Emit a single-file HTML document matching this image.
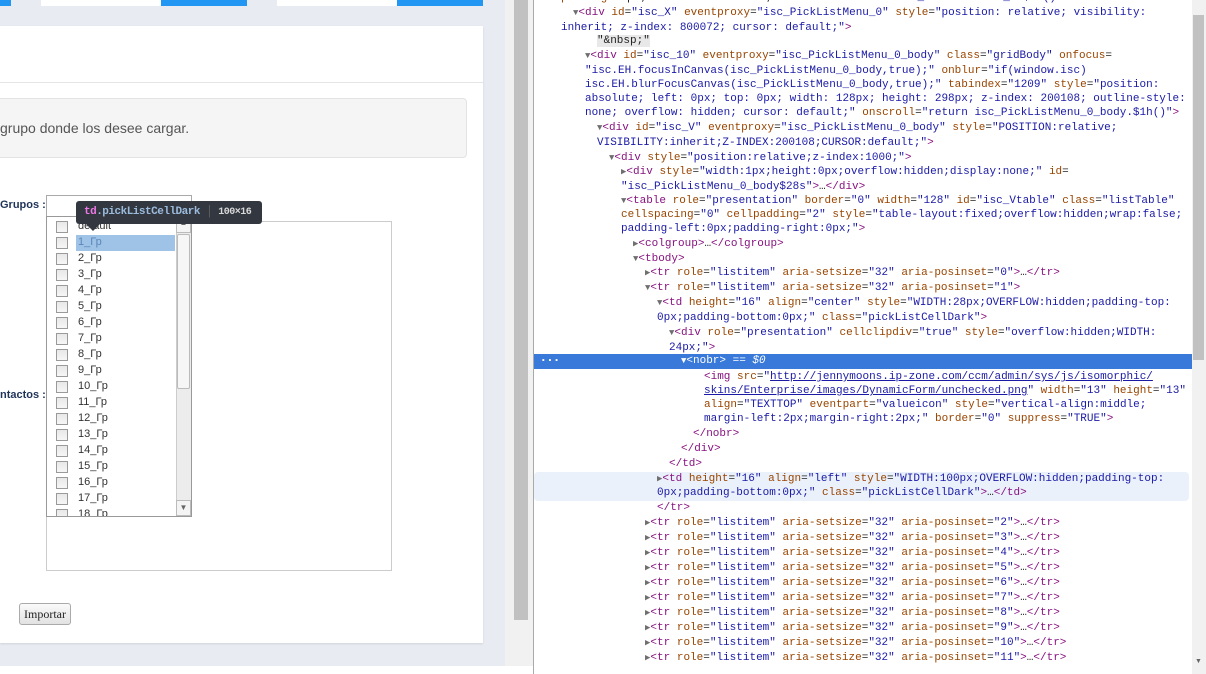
<!DOCTYPE html>
<html><head><meta charset="utf-8"><style>
*{margin:0;padding:0;box-sizing:border-box}
body{width:1206px;height:674px;overflow:hidden;background:#fff;position:relative;font-family:"Liberation Sans",sans-serif}
.abs{position:absolute}
#left{left:0;top:0;width:505px;height:666px;background:#e8ebf2;overflow:hidden}
.card{left:0;top:26px;width:483px;height:617px;background:#fff;box-shadow:0 1px 2px rgba(0,0,0,.1)}
.lbl{font:bold 11px "Liberation Sans",sans-serif;color:#1f3358}
.row{position:absolute;left:0;height:16px;width:128px;font:11px "Liberation Sans",sans-serif;color:#333}
.cb{position:absolute;left:9px;top:2px;width:12px;height:12px;border:1px solid #9a9a9a;background:linear-gradient(#e8e8e8,#f6f6f6)}
.rt{position:absolute;left:31px;top:1px}
#dt{left:533px;top:0;width:673px;height:674px;background:#fff;border-left:1px solid #aaa;overflow:hidden}
.ln{position:absolute;white-space:pre;font:11px/15px "Liberation Mono",monospace;letter-spacing:0;color:#222}
.t{color:#881280}.a{color:#994500}.v{color:#1a1aa6}.p{color:#a0a0a0}.tr{color:#6e6e6e;font-size:9px}
.u{text-decoration:underline;color:#1a1aa6}
</style></head><body>
<div id="left" class="abs">
 <div class="abs" style="left:0;top:0;width:11px;height:6px;background:#2196f3"></div>
 <div class="abs" style="left:41px;top:0;width:120px;height:6px;background:#fff"></div>
 <div class="abs" style="left:161px;top:0;width:86px;height:6px;background:#2196f3"></div>
 <div class="abs" style="left:277px;top:0;width:120px;height:6px;background:#fff"></div>
 <div class="abs" style="left:397px;top:0;width:86px;height:6px;background:#2196f3"></div>
 <div class="abs card"></div>
 <div class="abs" style="left:0;top:82px;width:483px;height:1px;background:#e5e5e5"></div>
 <div class="abs" style="left:-5px;top:98px;width:472px;height:60px;background:#f5f5f5;border:1px solid #e3e3e3;border-radius:4px"></div>
 <div class="abs" style="left:0;top:120px;font-size:14px;color:#555">grupo donde los desee cargar.</div>
 <div class="abs lbl" style="left:0;top:199px">Grupos :</div>
 <div class="abs lbl" style="left:0;top:389px">ntactos :</div>
 <div class="abs" style="left:46px;top:221px;width:346px;height:350px;border:1px solid #ccc;background:#fff"></div>
 <div class="abs" style="left:46px;top:195px;width:146px;height:22px;border:1px solid #aaa;background:#fff"></div>
 <div class="abs" style="left:46px;top:216px;width:146px;height:301px;border:1px solid #999;background:#fff;overflow:hidden">
  <div class="abs" style="left:0;top:0;width:128px;height:300px">
   <div class="row" style="top:2px"><div class="cb"></div><div class="rt">default</div></div>
   <div class="row" style="top:18px"><div class="cb"></div><div class="abs" style="left:29px;top:0;width:99px;height:16px;background:#9fc3e7"></div><div class="rt" style="color:#5b86b8">1_Гр</div></div>
   <div class="row" style="top:34px"><div class="cb"></div><div class="rt">2_Гр</div></div>
   <div class="row" style="top:50px"><div class="cb"></div><div class="rt">3_Гр</div></div>
   <div class="row" style="top:66px"><div class="cb"></div><div class="rt">4_Гр</div></div>
   <div class="row" style="top:82px"><div class="cb"></div><div class="rt">5_Гр</div></div>
   <div class="row" style="top:98px"><div class="cb"></div><div class="rt">6_Гр</div></div>
   <div class="row" style="top:114px"><div class="cb"></div><div class="rt">7_Гр</div></div>
   <div class="row" style="top:130px"><div class="cb"></div><div class="rt">8_Гр</div></div>
   <div class="row" style="top:146px"><div class="cb"></div><div class="rt">9_Гр</div></div>
   <div class="row" style="top:162px"><div class="cb"></div><div class="rt">10_Гр</div></div>
   <div class="row" style="top:178px"><div class="cb"></div><div class="rt">11_Гр</div></div>
   <div class="row" style="top:194px"><div class="cb"></div><div class="rt">12_Гр</div></div>
   <div class="row" style="top:210px"><div class="cb"></div><div class="rt">13_Гр</div></div>
   <div class="row" style="top:226px"><div class="cb"></div><div class="rt">14_Гр</div></div>
   <div class="row" style="top:242px"><div class="cb"></div><div class="rt">15_Гр</div></div>
   <div class="row" style="top:258px"><div class="cb"></div><div class="rt">16_Гр</div></div>
   <div class="row" style="top:274px"><div class="cb"></div><div class="rt">17_Гр</div></div>
   <div class="row" style="top:290px"><div class="cb"></div><div class="rt">18_Гр</div></div>
  </div>
  <div class="abs" style="left:129px;top:0;width:16px;height:300px;background:#ececec;border-left:1px solid #ccc"></div>
  <div class="abs" style="left:129px;top:0;width:15px;height:16px;background:#f4f4f4;border:1px solid #bbb;font-size:8px;color:#666;text-align:center">▲</div>
  <div class="abs" style="left:130px;top:17px;width:13px;height:155px;background:#f6f6f6;border:1px solid #bbb;border-radius:2px"></div>
  <div class="abs" style="left:129px;top:283px;width:15px;height:16px;background:#f4f4f4;border:1px solid #bbb;font-size:8px;color:#666;text-align:center;line-height:14px">▼</div>
 </div>
 <div class="abs" style="left:76px;top:201px;width:186px;height:23px;background:#333740;border-radius:3px;font:bold 11px/23px 'Liberation Mono',monospace;white-space:pre;padding-left:8px;letter-spacing:-0.5px;overflow:hidden"><span style="color:#ee78e6">td</span><span style="color:#9bbbdc">.pickListCellDark</span> <span style="color:#666;font-weight:normal">│</span> <span style="color:#d9d9d9;font-size:10px">100×16</span></div>
 <div class="abs" style="left:86px;top:224px;width:0;height:0;border-left:7px solid transparent;border-right:7px solid transparent;border-top:7px solid #333740"></div>
 <div class="abs" style="left:19px;top:603px;width:52px;height:22px;border:1px solid #aaa;border-radius:3px;background:linear-gradient(#fafafa,#e2e2e2);font:12px/20px 'Liberation Serif',serif;text-align:center;color:#222">Importar</div>
</div>
<div class="abs" style="left:505px;top:0;width:28px;height:666px;background:#f1f1f1"></div>
<div class="abs" style="left:514px;top:0;width:14px;height:620px;background:#c1c1c1"></div>
<div id="dt" class="abs">
 <div class="abs" style="left:0;top:354px;width:658px;height:15px;background:#3879d9"></div>
 <div class="abs" style="left:0;top:472px;width:655px;height:29px;background:#eaf1fb;border-radius:4px"></div>
 <div class="abs" style="left:6px;top:354px;color:#fff;font:bold 11px/13px monospace">···</div>
 <div class="abs" style="left:658px;top:0;width:15px;height:674px;background:#f1f1f1"></div>
 <div class="abs" style="left:659px;top:15px;width:11px;height:345px;background:#c1c1c1"></div>
 <div class="abs" style="left:661px;top:658px;font-size:7px;color:#666">▼</div>
</div>
<div class="abs" style="left:533px;top:0;width:658px;height:674px;overflow:hidden">
<div class="ln" style="left:28px;top:-9px"><span class="a">padding</span>: 0px; overflow: visible;" <span class="a">onscroll</span>=<span class="v">"return isc_PickListMenu_0.$1h()"</span><span class="t">&gt;</span></div>
<div class="ln" style="left:40px;top:6px"><span class="tr">▼</span><span class="t">&lt;div</span> <span class="a">id</span>=<span class="v">"isc_X"</span> <span class="a">eventproxy</span>=<span class="v">"isc_PickListMenu_0"</span> <span class="a">style</span>=<span class="v">"position: relative; visibility:</span></div>
<div class="ln" style="left:28px;top:21px"><span class="v">inherit; z-index: 800072; cursor: default;"</span><span class="t">&gt;</span></div>
<div class="ln" style="left:64px;top:34px"><span style="background:#e8e8e8">"&amp;nbsp;"</span></div>
<div class="ln" style="left:52px;top:49px"><span class="tr">▼</span><span class="t">&lt;div</span> <span class="a">id</span>=<span class="v">"isc_10"</span> <span class="a">eventproxy</span>=<span class="v">"isc_PickListMenu_0_body"</span> <span class="a">class</span>=<span class="v">"gridBody"</span> <span class="a">onfocus</span>=</div>
<div class="ln" style="left:52px;top:64px"><span class="v">"isc.EH.focusInCanvas(isc_PickListMenu_0_body,true);"</span> <span class="a">onblur</span>=<span class="v">"if(window.isc)</span></div>
<div class="ln" style="left:52px;top:78px"><span class="v">isc.EH.blurFocusCanvas(isc_PickListMenu_0_body,true);"</span> <span class="a">tabindex</span>=<span class="v">"1209"</span> <span class="a">style</span>=<span class="v">"position:</span></div>
<div class="ln" style="left:52px;top:92px"><span class="v">absolute; left: 0px; top: 0px; width: 128px; height: 298px; z-index: 200108; outline-style:</span></div>
<div class="ln" style="left:52px;top:106px"><span class="v">none; overflow: hidden; cursor: default;"</span> <span class="a">onscroll</span>=<span class="v">"return isc_PickListMenu_0_body.$1h()"</span><span class="t">&gt;</span></div>
<div class="ln" style="left:64px;top:121px"><span class="tr">▼</span><span class="t">&lt;div</span> <span class="a">id</span>=<span class="v">"isc_V"</span> <span class="a">eventproxy</span>=<span class="v">"isc_PickListMenu_0_body"</span> <span class="a">style</span>=<span class="v">"POSITION:relative;</span></div>
<div class="ln" style="left:64px;top:136px"><span class="v">VISIBILITY:inherit;Z-INDEX:200108;CURSOR:default;"</span><span class="t">&gt;</span></div>
<div class="ln" style="left:76px;top:151px"><span class="tr">▼</span><span class="t">&lt;div</span> <span class="a">style</span>=<span class="v">"position:relative;z-index:1000;"</span><span class="t">&gt;</span></div>
<div class="ln" style="left:88px;top:165px"><span class="tr">▶</span><span class="t">&lt;div</span> <span class="a">style</span>=<span class="v">"width:1px;height:0px;overflow:hidden;display:none;"</span> <span class="a">id</span>=</div>
<div class="ln" style="left:88px;top:180px"><span class="v">"isc_PickListMenu_0_body$28s"</span><span class="t">&gt;</span>…<span class="t">&lt;/div&gt;</span></div>
<div class="ln" style="left:88px;top:194px"><span class="tr">▼</span><span class="t">&lt;table</span> <span class="a">role</span>=<span class="v">"presentation"</span> <span class="a">border</span>=<span class="v">"0"</span> <span class="a">width</span>=<span class="v">"128"</span> <span class="a">id</span>=<span class="v">"isc_Vtable"</span> <span class="a">class</span>=<span class="v">"listTable"</span></div>
<div class="ln" style="left:88px;top:208px"><span class="a">cellspacing</span>=<span class="v">"0"</span> <span class="a">cellpadding</span>=<span class="v">"2"</span> <span class="a">style</span>=<span class="v">"table-layout:fixed;overflow:hidden;wrap:false;</span></div>
<div class="ln" style="left:88px;top:222px"><span class="v">padding-left:0px;padding-right:0px;"</span><span class="t">&gt;</span></div>
<div class="ln" style="left:100px;top:237px"><span class="tr">▶</span><span class="t">&lt;colgroup&gt;</span>…<span class="t">&lt;/colgroup&gt;</span></div>
<div class="ln" style="left:100px;top:252px"><span class="tr">▼</span><span class="t">&lt;tbody&gt;</span></div>
<div class="ln" style="left:112px;top:266px"><span class="tr">▶</span><span class="t">&lt;tr</span> <span class="a">role</span>=<span class="v">"listitem"</span> <span class="a">aria-setsize</span>=<span class="v">"32"</span> <span class="a">aria-posinset</span>=<span class="v">"0"</span><span class="t">&gt;</span>…<span class="t">&lt;/tr&gt;</span></div>
<div class="ln" style="left:112px;top:281px"><span class="tr">▼</span><span class="t">&lt;tr</span> <span class="a">role</span>=<span class="v">"listitem"</span> <span class="a">aria-setsize</span>=<span class="v">"32"</span> <span class="a">aria-posinset</span>=<span class="v">"1"</span><span class="t">&gt;</span></div>
<div class="ln" style="left:124px;top:296px"><span class="tr">▼</span><span class="t">&lt;td</span> <span class="a">height</span>=<span class="v">"16"</span> <span class="a">align</span>=<span class="v">"center"</span> <span class="a">style</span>=<span class="v">"WIDTH:28px;OVERFLOW:hidden;padding-top:</span></div>
<div class="ln" style="left:124px;top:311px"><span class="v">0px;padding-bottom:0px;"</span> <span class="a">class</span>=<span class="v">"pickListCellDark"</span><span class="t">&gt;</span></div>
<div class="ln" style="left:136px;top:326px"><span class="tr">▼</span><span class="t">&lt;div</span> <span class="a">role</span>=<span class="v">"presentation"</span> <span class="a">cellclipdiv</span>=<span class="v">"true"</span> <span class="a">style</span>=<span class="v">"overflow:hidden;WIDTH:</span></div>
<div class="ln" style="left:136px;top:341px"><span class="v">24px;"</span><span class="t">&gt;</span></div>
<div class="ln" style="left:148px;top:354px;color:#fff"><span class="tr" style="color:#fff">▼</span>&lt;nobr&gt; == <i>$0</i></div>
<div class="ln" style="left:171px;top:370px"><span class="t">&lt;img</span> <span class="a">src</span>=<span class="v">"</span><span class="u">http://jennymoons.ip-zone.com/ccm/admin/sys/js/isomorphic/</span></div>
<div class="ln" style="left:171px;top:384px"><span class="u">skins/Enterprise/images/DynamicForm/unchecked.png</span><span class="v">"</span> <span class="a">width</span>=<span class="v">"13"</span> <span class="a">height</span>=<span class="v">"13"</span></div>
<div class="ln" style="left:171px;top:398px"><span class="a">align</span>=<span class="v">"TEXTTOP"</span> <span class="a">eventpart</span>=<span class="v">"valueicon"</span> <span class="a">style</span>=<span class="v">"vertical-align:middle;</span></div>
<div class="ln" style="left:171px;top:412px"><span class="v">margin-left:2px;margin-right:2px;"</span> <span class="a">border</span>=<span class="v">"0"</span> <span class="a">suppress</span>=<span class="v">"TRUE"</span><span class="t">&gt;</span></div>
<div class="ln" style="left:160px;top:427px"><span class="t">&lt;/nobr&gt;</span></div>
<div class="ln" style="left:148px;top:442px"><span class="t">&lt;/div&gt;</span></div>
<div class="ln" style="left:136px;top:457px"><span class="t">&lt;/td&gt;</span></div>
<div class="ln" style="left:124px;top:472px"><span class="tr">▶</span><span class="t">&lt;td</span> <span class="a">height</span>=<span class="v">"16"</span> <span class="a">align</span>=<span class="v">"left"</span> <span class="a">style</span>=<span class="v">"WIDTH:100px;OVERFLOW:hidden;padding-top:</span></div>
<div class="ln" style="left:124px;top:486px"><span class="v">0px;padding-bottom:0px;"</span> <span class="a">class</span>=<span class="v">"pickListCellDark"</span><span class="t">&gt;</span>…<span class="t">&lt;/td&gt;</span></div>
<div class="ln" style="left:124px;top:501px"><span class="t">&lt;/tr&gt;</span></div>
<div class="ln" style="left:112px;top:516px"><span class="tr">▶</span><span class="t">&lt;tr</span> <span class="a">role</span>=<span class="v">"listitem"</span> <span class="a">aria-setsize</span>=<span class="v">"32"</span> <span class="a">aria-posinset</span>=<span class="v">"2"</span><span class="t">&gt;</span>…<span class="t">&lt;/tr&gt;</span></div>
<div class="ln" style="left:112px;top:531px"><span class="tr">▶</span><span class="t">&lt;tr</span> <span class="a">role</span>=<span class="v">"listitem"</span> <span class="a">aria-setsize</span>=<span class="v">"32"</span> <span class="a">aria-posinset</span>=<span class="v">"3"</span><span class="t">&gt;</span>…<span class="t">&lt;/tr&gt;</span></div>
<div class="ln" style="left:112px;top:546px"><span class="tr">▶</span><span class="t">&lt;tr</span> <span class="a">role</span>=<span class="v">"listitem"</span> <span class="a">aria-setsize</span>=<span class="v">"32"</span> <span class="a">aria-posinset</span>=<span class="v">"4"</span><span class="t">&gt;</span>…<span class="t">&lt;/tr&gt;</span></div>
<div class="ln" style="left:112px;top:561px"><span class="tr">▶</span><span class="t">&lt;tr</span> <span class="a">role</span>=<span class="v">"listitem"</span> <span class="a">aria-setsize</span>=<span class="v">"32"</span> <span class="a">aria-posinset</span>=<span class="v">"5"</span><span class="t">&gt;</span>…<span class="t">&lt;/tr&gt;</span></div>
<div class="ln" style="left:112px;top:576px"><span class="tr">▶</span><span class="t">&lt;tr</span> <span class="a">role</span>=<span class="v">"listitem"</span> <span class="a">aria-setsize</span>=<span class="v">"32"</span> <span class="a">aria-posinset</span>=<span class="v">"6"</span><span class="t">&gt;</span>…<span class="t">&lt;/tr&gt;</span></div>
<div class="ln" style="left:112px;top:591px"><span class="tr">▶</span><span class="t">&lt;tr</span> <span class="a">role</span>=<span class="v">"listitem"</span> <span class="a">aria-setsize</span>=<span class="v">"32"</span> <span class="a">aria-posinset</span>=<span class="v">"7"</span><span class="t">&gt;</span>…<span class="t">&lt;/tr&gt;</span></div>
<div class="ln" style="left:112px;top:606px"><span class="tr">▶</span><span class="t">&lt;tr</span> <span class="a">role</span>=<span class="v">"listitem"</span> <span class="a">aria-setsize</span>=<span class="v">"32"</span> <span class="a">aria-posinset</span>=<span class="v">"8"</span><span class="t">&gt;</span>…<span class="t">&lt;/tr&gt;</span></div>
<div class="ln" style="left:112px;top:621px"><span class="tr">▶</span><span class="t">&lt;tr</span> <span class="a">role</span>=<span class="v">"listitem"</span> <span class="a">aria-setsize</span>=<span class="v">"32"</span> <span class="a">aria-posinset</span>=<span class="v">"9"</span><span class="t">&gt;</span>…<span class="t">&lt;/tr&gt;</span></div>
<div class="ln" style="left:112px;top:636px"><span class="tr">▶</span><span class="t">&lt;tr</span> <span class="a">role</span>=<span class="v">"listitem"</span> <span class="a">aria-setsize</span>=<span class="v">"32"</span> <span class="a">aria-posinset</span>=<span class="v">"10"</span><span class="t">&gt;</span>…<span class="t">&lt;/tr&gt;</span></div>
<div class="ln" style="left:112px;top:651px"><span class="tr">▶</span><span class="t">&lt;tr</span> <span class="a">role</span>=<span class="v">"listitem"</span> <span class="a">aria-setsize</span>=<span class="v">"32"</span> <span class="a">aria-posinset</span>=<span class="v">"11"</span><span class="t">&gt;</span>…<span class="t">&lt;/tr&gt;</span></div>
</div>
</body></html>
